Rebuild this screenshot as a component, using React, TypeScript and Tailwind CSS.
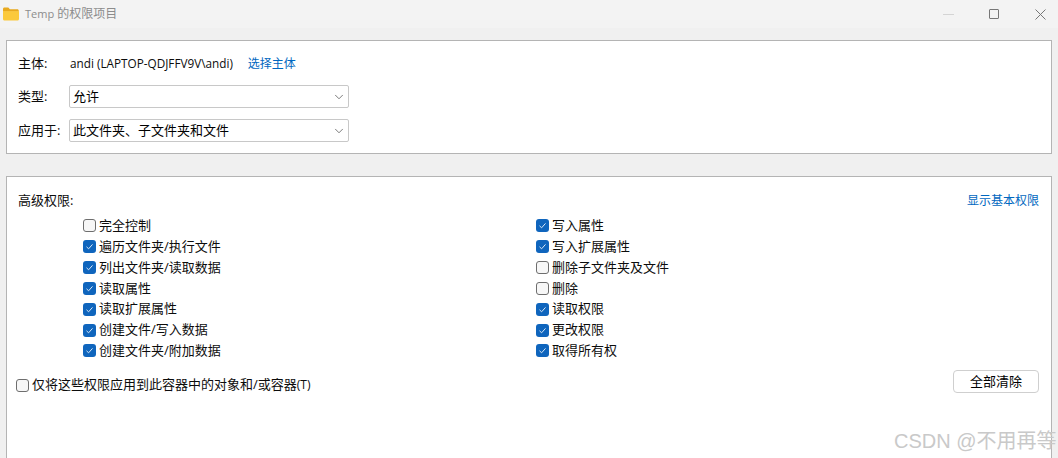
import { ChevronDown } from "lucide-react"

const leftPerms: [string, boolean][] = [
  ["完全控制", false],
  ["遍历文件夹/执行文件", true],
  ["列出文件夹/读取数据", true],
  ["读取属性", true],
  ["读取扩展属性", true],
  ["创建文件/写入数据", true],
  ["创建文件夹/附加数据", true],
]

const rightPerms: [string, boolean][] = [
  ["写入属性", true],
  ["写入扩展属性", true],
  ["删除子文件夹及文件", false],
  ["删除", false],
  ["读取权限", true],
  ["更改权限", true],
  ["取得所有权", true],
]

function CheckBox({ checked }: { checked: boolean }) {
  if (checked) {
    return (
      <span className="flex h-[13px] w-[13px] shrink-0 items-center justify-center rounded-[3px] bg-[#0f65bd]">
        <svg width="9" height="9" viewBox="0 0 9 9" fill="none">
          <path d="M1.5 4.8L3.6 6.8L7.5 2.4" stroke="#d9e8f7" strokeWidth="1" />
        </svg>
      </span>
    )
  }
  return <span className="h-[13px] w-[13px] shrink-0 rounded-[3px] border border-[#6e6e6e] bg-[#f7f7f7]" />
}

function PermRow({ label, checked }: { label: string; checked: boolean }) {
  return (
    <div className="flex h-[20.83px] items-center gap-[3px]">
      <CheckBox checked={checked} />
      <span>{label}</span>
    </div>
  )
}

function Select({ value }: { value: string }) {
  return (
    <div className="flex h-[23px] w-[280px] items-center justify-between rounded-[2px] border border-[#c8c8c8] pl-[3px] pr-[2px] text-black">
      <span className="pt-[1px]">{value}</span>
      <ChevronDown size={14} strokeWidth={1.2} className="text-[#444]" />
    </div>
  )
}

export default function App() {
  return (
    <div
      className="relative h-[458px] w-[1058px] overflow-hidden bg-[#f0f0f0] text-[13px] text-[#0c0c0c]"
      style={{ fontFamily: '"Open Sans", "Noto Sans CJK SC", sans-serif' }}
    >
      {/* Title bar */}
      <div className="flex h-[28px] items-center bg-[#f3f3f3] pl-[3px]">
        <svg width="16" height="14" viewBox="0 0 16 14" className="mb-[1px]">
          <path d="M0 2.2C0 1.2.6.6 1.5.6h3.8l1.6 1.6h7.4c.9 0 1.5.6 1.5 1.5v1H0z" fill="#e8a91e" />
          <path d="M0 4.2h16v7.9c0 .9-.6 1.5-1.5 1.5h-13C.6 13.6 0 13 0 12.1z" fill="#fbc93c" />
        </svg>
        <span className="ml-[6px] text-[12px] text-[#8c8c8c]">
          <span className="text-[11px]">Temp</span> 的权限项目
        </span>
        <div className="ml-auto flex items-center">
          <span className="mr-[35px] h-px w-[11px] bg-[#d4d4d4]" />
          <span className="mr-[36px] h-[10px] w-[10px] rounded-[1px] border border-[#777]" />
          <svg width="11" height="11" viewBox="0 0 11 11" className="mr-[12px]">
            <path d="M.5.5l10 10M10.5.5l-10 10" stroke="#777" strokeWidth="1" />
          </svg>
        </div>
      </div>

      <div className="px-[6px] pt-[12px]">
        {/* Principal panel */}
        <div className="h-[114px] border border-[#b4b4b4] bg-white pl-[11px] pt-[11px]">
          <div className="flex h-[24px] items-center">
            <span className="w-[52px]">主体:</span>
            <span className="text-[11.75px]">andi (LAPTOP-QDJFFV9V\andi)</span>
            <span className="ml-[15px] text-[12px] text-[#0067c0]">选择主体</span>
          </div>
          <div className="mt-[9px] flex items-center">
            <span className="w-[51px]">类型:</span>
            <Select value="允许" />
          </div>
          <div className="mt-[11px] flex items-center">
            <span className="w-[51px]">应用于:</span>
            <Select value="此文件夹、子文件夹和文件" />
          </div>
        </div>

        {/* Permissions panel */}
        <div className="mt-[22px] h-[300px] border border-[#b4b4b4] bg-white pl-[11px] pr-[12px] pt-[14px]">
          <div className="flex items-center justify-between">
            <span>高级权限:</span>
            <span className="text-[12px] text-[#0067c0]">显示基本权限</span>
          </div>
          <div className="mt-[5px] flex pl-[65px]">
            <div className="w-[453px]">
              {leftPerms.map(([label, checked]) => (
                <PermRow key={label} label={label} checked={checked} />
              ))}
            </div>
            <div>
              {rightPerms.map(([label, checked]) => (
                <PermRow key={label} label={label} checked={checked} />
              ))}
            </div>
          </div>
          <div className="mt-[9px] flex items-start justify-between">
            <div className="-ml-[2px] mt-[5px] flex items-center gap-[3px]">
              <CheckBox checked={false} />
              <span>
                仅将这些权限应用到此容器中的对象和/或容器<span className="text-[12px]">(T)</span>
              </span>
            </div>
            <button className="h-[23px] w-[86px] rounded-[4px] border border-[#cfcfcf] bg-white text-black">全部清除</button>
          </div>
        </div>
      </div>

      {/* Watermark */}
      <span className="absolute left-[894px] top-[428px] text-[20px] leading-[26px] text-[#c9c9c9]" style={{ fontFamily: '"Liberation Sans", "Noto Sans CJK SC", sans-serif' }}>
        CSDN @不用再等
      </span>
    </div>
  )
}
